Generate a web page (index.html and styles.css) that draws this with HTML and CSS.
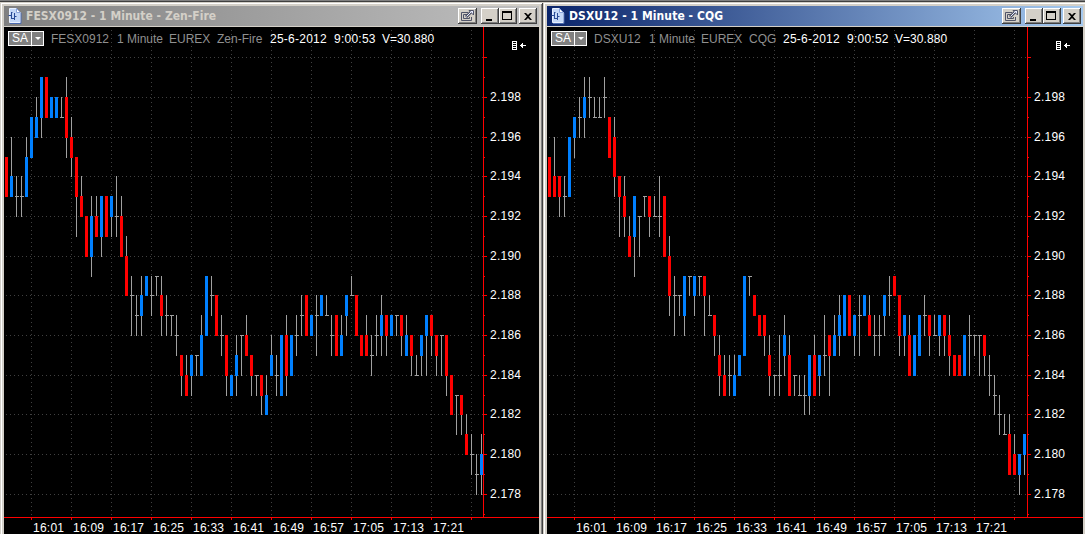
FILE: index.html
```html
<!DOCTYPE html>
<html>
<head>
    <meta charset="UTF-8">
    <title>Charts</title>
    <link rel="stylesheet" href="styles.css">
</head>
<body>
    <svg class="defs" width="0" height="0">
        <symbol id="icon-doc" viewBox="0 0 14 16">
            <path d="M1.500 .5h7l4 4v10h-11z" fill="#c4d8f8" stroke="#e8f0ff"/>
            <path d="M13 5v10.500H2" fill="none" stroke="#4a6ab0"/>
            <path d="M8.500 .5v4h4z" fill="#fff" stroke="#8aa4dc"/>
            <path d="M3.500 4v7M.5 7.500h3M6.500 5v7M6.500 8.500h2M3.500 4.500h1M3.500 10.500h3" fill="none" stroke="#2a4c98"/>
        </symbol>
        <symbol id="icon-detach" viewBox="0 0 15 12">
            <path d="M8 2.500H1.500v8h10V7" fill="none" stroke="#505468"/>
            <path d="M7 4.500H3.500v4h6V7" fill="none" stroke="#505468"/>
            <path d="M6 7l5-5" stroke="#505468" stroke-width="3"/>
            <path d="M9 .5h4.500v4.500z" fill="#e8ecff" stroke="#505468"/>
            <path d="M6.500 6.500l5-5" stroke="#e8ecff"/>
        </symbol>
        <symbol id="icon-scale" viewBox="0 0 15 9">
            <path d="M0 0h5v9H0z" fill="#fff"/>
            <path d="M1 1.500h3M1 3.500h3M1 5.500h3M1 7.500h3" stroke="#000"/>
            <path d="M8 4.500h6M10.500 2v5M9.500 3v3" stroke="#fff"/>
        </symbol>
    </svg>

    <div class="window inactive">
        <div class="titlebar">
            <svg class="doc"><use href="#icon-doc"/></svg>
            <span class="caption">FESX0912 - 1 Minute - Zen-Fire</span>
            <div class="btn detach"><svg width="15" height="12"><use href="#icon-detach"/></svg></div>
            <div class="btn min"><i></i></div>
            <div class="btn max"><i></i></div>
            <div class="btn close"><svg width="8" height="7"><path d="M0 0h2l2 2 2-2h2L5 3.500 8 7H6L4 5 2 7H0l3-3.500z"/></svg></div>
        </div>
        <div class="client">
            <svg class="chart" id="chart1"></svg>
            <div class="info">
                <div class="study"><span>SA</span><b></b></div>
                <span class="symbol">FESX0912</span>
                <span class="interval">1 Minute</span>
                <span class="exchange">EUREX</span>
                <span class="feed">Zen-Fire</span>
                <span class="date">25-6-2012</span>
                <span class="time">9:00:53</span>
                <span class="volume">V=30.880</span>
            </div>
            <svg class="scale"><use href="#icon-scale"/></svg>
        </div>
    </div>

    <div class="window active">
        <div class="titlebar">
            <svg class="doc"><use href="#icon-doc"/></svg>
            <span class="caption">DSXU12 - 1 Minute - CQG</span>
            <div class="btn detach"><svg width="15" height="12"><use href="#icon-detach"/></svg></div>
            <div class="btn min"><i></i></div>
            <div class="btn max"><i></i></div>
            <div class="btn close"><svg width="8" height="7"><path d="M0 0h2l2 2 2-2h2L5 3.500 8 7H6L4 5 2 7H0l3-3.500z"/></svg></div>
        </div>
        <div class="client">
            <svg class="chart" id="chart2"></svg>
            <div class="info">
                <div class="study"><span>SA</span><b></b></div>
                <span class="symbol">DSXU12</span>
                <span class="interval">1 Minute</span>
                <span class="exchange">EUREX</span>
                <span class="feed">CQG</span>
                <span class="date">25-6-2012</span>
                <span class="time">9:00:52</span>
                <span class="volume">V=30.880</span>
            </div>
            <svg class="scale"><use href="#icon-scale"/></svg>
        </div>
    </div>

    <script src="chart.js"></script>
</body>
</html>
```
FILE: styles.css
```css
body {
    margin: 0;
    height: 534px;
    overflow: hidden;
    display: flex;
    box-sizing: border-box;
    padding-top: 2px;
    background: linear-gradient(#808080 1px, #404040 1px);
    font-family: "Liberation Sans", Arial, sans-serif;
    font-size: 12px;
}

.defs {
    position: absolute;
}

/* Window frame */
.window {
    flex: none;
    width: 543px;
    height: 532px;
    box-sizing: border-box;
    padding: 4px 4px 0;
    background: #d4d0c8;
    box-shadow: inset 1px 1px #d4d0c8, inset -1px 0 #404040,
        inset 2px 2px #fff, inset -2px 0 #808080;
}

.window.active {
    width: 544px;
}

.titlebar {
    height: 20px;
    margin-bottom: 1px;
    box-sizing: border-box;
    padding: 0 2px 0 4px;
    display: flex;
    align-items: center;
    background: linear-gradient(to right, #808080, #c0c0c0);
    color: #d4d0c8;
}

.active .titlebar {
    background: linear-gradient(to right, #0a246a, #a6caf0);
    color: #fff;
}

.doc {
    width: 14px;
    height: 16px;
}

.caption {
    flex: 1;
    margin-left: 4px;
    font: bold 12px "DejaVu Sans Condensed", "DejaVu Sans", sans-serif;
    letter-spacing: 0.02px;
    white-space: nowrap;
}

.active .caption {
    letter-spacing: 0.08px;
}

.btn {
    width: 18px;
    height: 16px;
    box-sizing: border-box;
    display: flex;
    align-items: center;
    justify-content: center;
    background: #d4d0c8;
    box-shadow: inset -1px -1px #404040, inset 1px 1px #fff, inset -2px -2px #808080;
}

.btn.detach {
    width: 19px;
    margin-right: 4px;
}

.btn.min i {
    width: 6px;
    height: 2px;
    margin: 7px 3px 0 0;
    background: #000;
}

.btn.max i {
    width: 10px;
    height: 9px;
    margin: 0 2px 1px 0;
    box-sizing: border-box;
    border: 1px solid #000;
    border-top-width: 2px;
}

.btn.close {
    margin-left: 2px;
}

/* Chart area */
.client {
    position: relative;
    height: 507px;
    background: #000;
    overflow: hidden;
}

.chart {
    display: block;
    width: 100%;
    height: 507px;
}

.chart text {
    fill: #fff;
    letter-spacing: 0.25px;
}

.info {
    position: absolute;
    top: 4px;
    left: 4px;
    display: flex;
    align-items: center;
    height: 15px;
    color: #909090;
    white-space: nowrap;
}

.study {
    width: 36px;
    height: 15px;
    margin-right: 7px;
    box-sizing: border-box;
    border: 1px solid #fff;
    display: flex;
    align-items: center;
    background: #808080;
    color: #fff;
}

.study span {
    width: 22px;
    text-align: center;
    border-right: 1px solid #fff;
    line-height: 13px;
}

.study b {
    margin-left: 3px;
    border: 3px solid transparent;
    border-top-color: #fff;
    border-bottom: 0;
}

.symbol { width: 66px; }
.active .symbol { width: 55px; }
.interval { width: 52px; }
.exchange { width: 48px; }
.feed { width: 53px; }
.active .feed { width: 34px; }

.date, .time, .volume {
    color: #fff;
    letter-spacing: 0.25px;
}

.date { width: 64px; }
.time { width: 48px; }

.volume {
    letter-spacing: 0.05px;
}

.scale {
    position: absolute;
    top: 14px;
    right: 12px;
    width: 15px;
    height: 9px;
}
```
FILE: chart.js
```js
// open, high, low, close in ticks above 2.100
var fesx = [
    [95,95,93,93],[93,96,93,94],[93,94,92,93],[93,94,92,93],[93,96,93,95],[95,97,95,97],
    [96,98,96,97],[97,99,96,99],[99,99,97,97],[97,98,97,98],[97,98,97,98],[97,98,97,97],
    [98,99,95,96],[96,97,94,95],[95,95,91,93],[93,94,92,92],[92,92,90,90],[90,93,89,92],
    [92,93,91,91],[91,93,90,93],[93,93,91,91],[92,93,91,93],[92,94,91,92],[92,93,90,90],
    [90,91,88,88],[88,89,86,88],[87,88,86,87],[87,89,86,88],[88,89,88,89],[88,89,87,88],
    [89,89,88,89],[88,89,86,87],[87,88,86,87],[87,87,86,87],[86,87,85,86],[85,85,83,84],
    [84,85,83,83],[84,85,83,85],[85,85,84,85],[84,87,84,86],[86,89,86,89],[88,89,87,88],
    [88,88,86,86],[86,87,85,86],[86,86,83,84],[83,84,83,84],[84,86,83,85],[86,86,84,86],
    [86,87,85,85],[85,85,83,84],[84,84,83,84],[84,84,82,83],[82,84,82,83],[84,86,84,85],
    [84,85,83,84],[83,86,83,86],[86,87,83,84],[84,86,84,86],[86,87,85,86],[87,88,86,87],
    [88,88,86,86],[86,87,86,87],[87,88,85,87],[87,88,87,88],[87,88,87,87],[86,87,85,86],
    [87,87,85,85],[85,87,85,86],[87,88,86,88],[88,89,88,88],[88,88,86,86],[86,86,85,85],
    [86,87,85,85],[85,86,84,85],[86,87,85,86],[86,88,85,87],[87,87,85,86],[86,87,86,87],
    [87,87,86,87],[87,87,85,86],[85,87,85,86],[86,86,84,85],[84,85,84,84],[85,86,84,86],
    [86,87,84,87],[87,87,85,86],[86,86,84,85],[86,86,84,86],[86,86,83,84],[84,84,82,82],
    [83,83,81,83],[83,83,81,82],[81,82,80,80],[80,81,79,80],[79,80,78,79],[79,81,78,80]
];

var dsxu = [
    [95,95,93,93],[94,96,93,93],[94,94,92,93],[93,94,92,93],[93,96,93,96],[96,97,95,97],
    [97,98,96,97],[97,99,96,98],[98,99,97,98],[97,98,97,97],[97,98,97,97],[98,99,97,98],
    [97,97,95,95],[96,97,93,94],[94,94,91,93],[93,94,91,92],[91,92,90,90],[91,93,89,93],
    [92,92,90,92],[93,93,92,93],[93,93,91,92],[92,93,92,92],[92,94,91,92],[93,93,90,90],
    [90,91,87,88],[88,89,86,88],[88,88,87,88],[87,89,86,89],[89,89,88,89],[88,89,87,89],
    [89,89,88,89],[89,89,86,88],[87,88,87,87],[87,87,85,86],[85,86,83,84],[84,85,83,83],
    [84,85,83,84],[83,85,83,84],[84,85,84,85],[85,89,85,89],[89,89,88,89],[88,88,87,87],
    [87,87,86,86],[87,87,85,86],[85,86,83,84],[84,84,83,84],[84,86,83,84],[85,87,84,86],
    [85,86,83,83],[84,84,83,84],[83,84,83,83],[83,84,82,83],[83,85,82,85],[85,86,83,83],
    [84,85,83,85],[85,87,84,85],[86,86,83,85],[85,87,85,86],[86,88,85,87],[86,88,86,88],
    [88,88,86,86],[86,87,85,87],[87,88,85,87],[87,88,87,88],[87,88,86,86],[86,87,85,86],
    [86,87,85,86],[87,88,86,88],[88,89,87,88],[89,89,88,88],[88,88,85,86],[86,87,85,87],
    [86,87,84,84],[84,86,84,86],[85,87,85,87],[87,88,86,87],[87,87,85,86],[86,87,86,86],
    [86,87,85,87],[87,87,85,86],[86,87,84,85],[85,85,84,84],[85,85,84,84],[84,86,84,86],
    [86,87,84,86],[86,86,85,86],[86,86,84,86],[86,86,84,85],[84,85,83,84],[83,84,82,83],
    [82,83,81,82],[81,82,81,81],[81,82,79,79],[80,81,79,79],[79,80,78,80],[80,81,79,81]
];

var times = ["16:01", "16:09", "16:17", "16:25", "16:33", "16:41", "16:49", "16:57", "17:05", "17:13", "17:21"];

function rect(x, y, w, h, color) {
    return '<rect x="' + x + '" y="' + y + '" width="' + w + '" height="' + h + '" fill="' + color + '"/>';
}

function priceY(p) {
    return Math.round(70 + (98 - p) * 19.84);
}

function drawChart(id, data, x0, axisX) {
    var svg = document.getElementById(id);
    var out = "";
    var axisY = 490;
    var i, p, x, y;

    // dotted grid
    for (p = 78; p <= 100; p += 2) {
        y = priceY(p);
        for (x = x0; x < axisX; x += 4) {
            out += rect(x, y, 1, 1, "#404040");
        }
    }
    for (i = 0; i < 12; i++) {
        x = x0 + 25 + i * 40;
        for (y = 3; y < axisY; y += 4) {
            out += rect(x, y, 1, 1, "#404040");
        }
    }

    // candles
    data.forEach(function(c, n) {
        var cx = x0 + n * 5;
        var high = priceY(c[1]);
        out += rect(cx, high, 1, priceY(c[2]) - high + 1, "#a0a0a0");
        if (c[0] === c[3]) {
            out += rect(cx - 1, priceY(c[0]), 4, 1, "#a0a0a0");
        } else {
            var top = priceY(Math.max(c[0], c[3]));
            var bottom = priceY(Math.min(c[0], c[3]));
            out += rect(cx - 1, top, 3, bottom - top + 1, c[3] > c[0] ? "#0080ff" : "#ff0000");
        }
    });

    // axes
    out += rect(axisX, 0, 1, axisY + 1, "#ff0000");
    out += rect(0, axisY, 540, 1, "#ff0000");
    for (p = 77; p <= 100; p++) {
        out += rect(axisX + 1, priceY(p), p % 2 ? 1 : 3, 1, "#ff0000");
        if (p % 2 === 0 && p < 100) {
            out += '<text x="' + (axisX + 7) + '" y="' + (priceY(p) + 4) + '">2.1' + p + '</text>';
        }
    }
    for (i = 0; i < 12; i++) {
        x = x0 + 25 + i * 40;
        out += rect(x, axisY + 1, 1, 2, "#ff0000");
        if (times[i]) {
            out += '<text x="' + (x + 2) + '" y="505">' + times[i] + '</text>';
        }
    }
    svg.innerHTML = out;
}

drawChart("chart1", fesx, 2, 479);
drawChart("chart2", dsxu, 2, 480);
```
